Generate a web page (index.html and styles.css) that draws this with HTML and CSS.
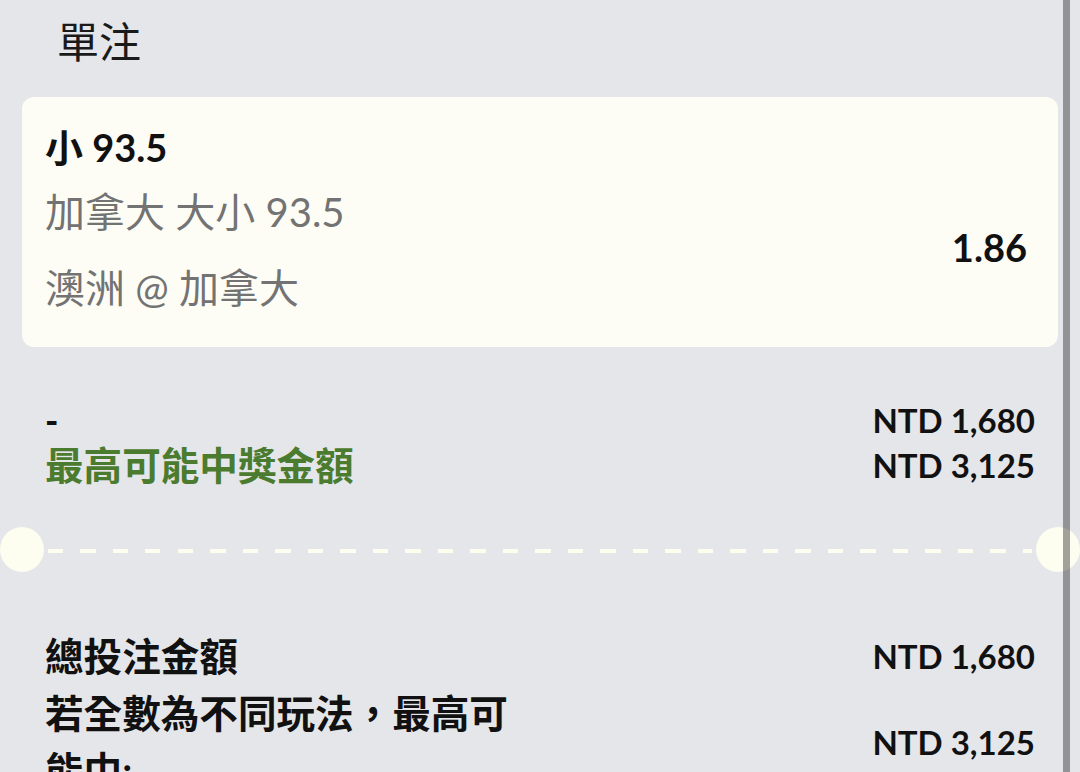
FILE: index.html
```html
<!DOCTYPE html>
<html lang="zh-Hant">
<head>
  <meta charset="UTF-8">
  <meta name="viewport" content="width=device-width, initial-scale=1.0">
  <title>單注</title>
  <link rel="stylesheet" href="styles.css">
</head>
<body>

  <div class="slip">
    <h2 class="slip-title">單注</h2>

    <div class="bet-card">
      <div class="bet-info">
        <div class="bet-pick">小 93.5</div>
        <div class="bet-market">加拿大 大小 93.5</div>
        <div class="bet-match">澳洲 @ 加拿大</div>
      </div>
      <div class="bet-odds">1.86</div>
    </div>

    <div class="stake-rows">
      <div class="row">
        <span class="label dash">-</span>
        <span class="value">NTD 1,680</span>
      </div>
      <div class="row">
        <span class="label win-label">最高可能中獎金額</span>
        <span class="value">NTD 3,125</span>
      </div>
    </div>

    <div class="divider">
      <span class="notch"></span>
      <span class="dashes"></span>
      <span class="notch"></span>
    </div>

    <div class="summary">
      <div class="row">
        <span class="label">總投注金額</span>
        <span class="value">NTD 1,680</span>
      </div>
      <div class="row">
        <span class="label">若全數為不同玩法，最高可能中:</span>
        <span class="value">NTD 3,125</span>
      </div>
    </div>
  </div>

  <div class="scrollbar"></div>

</body>
</html>
```

FILE: styles.css
```css
html, body {
  margin: 0;
  height: 100%;
  overflow: hidden;
}
body {
  font-family: Lato, "Noto Sans CJK TC", sans-serif;
  background-color: #e5e6e9;
  color: #111;
  position: relative;
}
.slip {
  padding: 0 22px;
}
.slip-title {
  margin: 0;
  padding-left: 35px;
  font-size: 42px;
  font-weight: 400;
  line-height: 84px;
  color: #1a1a1a;
}
.bet-card {
  margin-top: 13px;
  background-color: #fdfdf5;
  border-radius: 12px;
  padding: 25px 31px 34px 23px;
  display: flex;
  justify-content: space-between;
  align-items: center;
}
.bet-pick {
  font-size: 38px;
  font-weight: 700;
  line-height: 50px;
}
.bet-market,
.bet-match {
  font-size: 40px;
  line-height: 50px;
  color: #737373;
}
.bet-market {
  margin-top: 15px;
}
.bet-match {
  margin-top: 26px;
}
.bet-odds {
  margin-top: 58px;
  font-size: 38px;
  font-weight: 700;
}
.row {
  display: flex;
  justify-content: space-between;
  align-items: center;
  padding: 0 23px;
  font-weight: 700;
}
.label {
  font-size: 38.6px;
}
.value {
  font-size: 33px;
  white-space: nowrap;
}
.stake-rows {
  margin-top: 51px;
}
.stake-rows .row {
  line-height: 45px;
}
.stake-rows .dash {
  font-size: 36px;
  font-weight: 900;
}
.win-label {
  color: #4b7b2e;
}
.divider {
  margin: 39px -22px 0;
  display: flex;
  align-items: center;
}
.notch {
  width: 44px;
  height: 45px;
  border-radius: 50%;
  background-color: #fdfdf0;
  flex-shrink: 0;
}
.dashes {
  flex: 1;
  height: 4px;
  margin: 2px 4px 0;
  background: repeating-linear-gradient(to right, #fdfdf0 0 15px, transparent 15px 32.5px);
}
.summary {
  margin-top: 56px;
}
.summary .row {
  line-height: 57px;
}
.summary .label {
  width: 490px;
}
.scrollbar {
  position: absolute;
  top: 0;
  bottom: 0;
  left: 1063px;
  width: 7px;
  background-color: rgba(0, 0, 0, 0.36);
}
```
